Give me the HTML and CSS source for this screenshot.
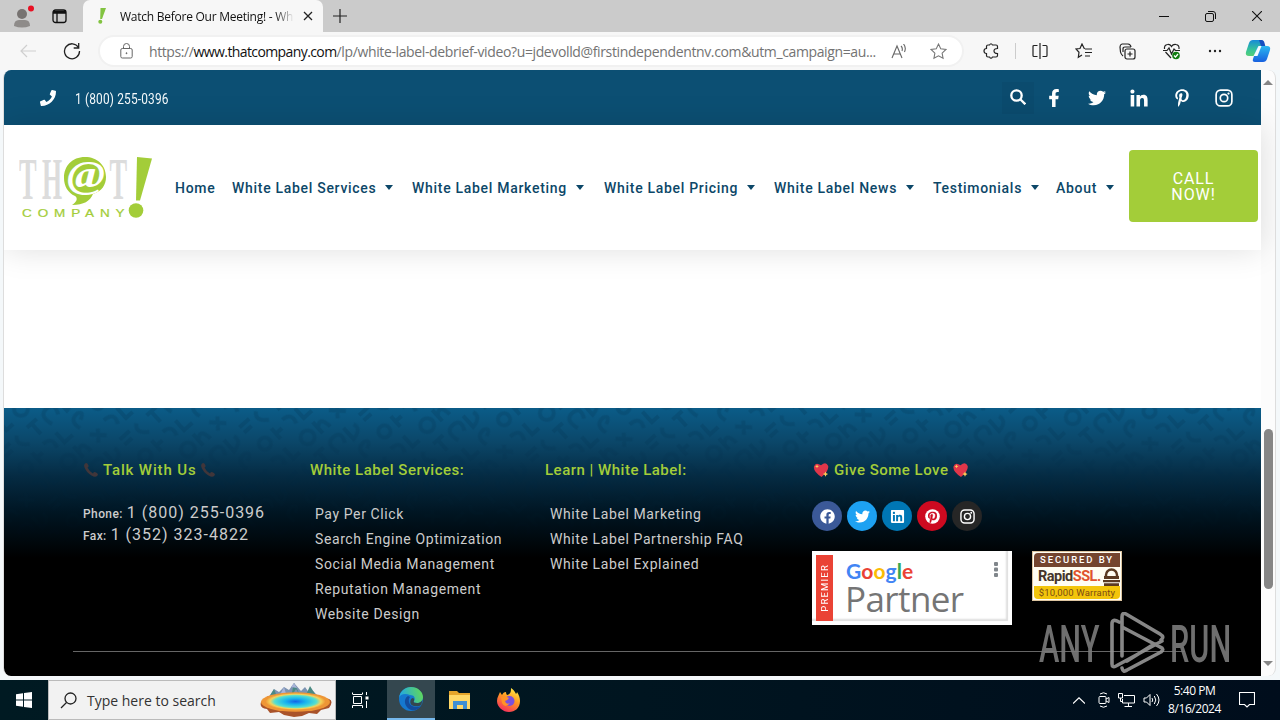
FILE: index.html
```html
<!DOCTYPE html>
<html lang="en">
<head>
  <meta charset="UTF-8">
  <meta name="viewport" content="width=device-width, initial-scale=1.0">
  <title>Watch Before Our Meeting! - White Label</title>
  <link rel="stylesheet" href="styles.css">
</head>
<body>
  <!-- shared icons -->
  <svg class="defs" width="0" height="0">
    <symbol id="twitter" viewBox="0 0 512 512"><path d="M459.37 151.716c.325 4.548.325 9.097.325 13.645 0 138.72-105.583 298.558-298.558 298.558-59.452 0-114.68-17.219-161.137-47.106 8.447.974 16.568 1.299 25.34 1.299 49.055 0 94.213-16.568 130.274-44.832-46.132-.975-84.792-31.188-98.112-72.772 6.498.974 12.995 1.624 19.818 1.624 9.421 0 18.843-1.3 27.614-3.573-48.081-9.747-84.143-51.98-84.143-102.985v-1.299c13.969 7.797 30.214 12.67 47.431 13.319-28.264-18.843-46.781-51.005-46.781-87.391 0-19.492 5.197-37.36 14.294-52.954 51.655 63.675 129.3 105.258 216.365 109.807-1.624-7.797-2.599-15.918-2.599-24.04 0-57.828 46.782-104.934 104.934-104.934 30.213 0 57.502 12.67 76.67 33.137 23.715-4.548 46.456-13.32 66.599-25.34-7.798 24.366-24.366 44.833-46.132 57.827 21.117-2.273 41.584-8.122 60.426-16.243-14.292 20.791-32.161 39.308-52.628 54.253z"/></symbol>
    <symbol id="pinterest" viewBox="0 0 384 512"><path d="M204 6.5C101.4 6.5 0 74.9 0 185.6 0 256 39.6 296 63.6 296c9.9 0 15.6-27.6 15.6-35.4 0-9.3-23.7-29.1-23.7-67.8 0-80.4 61.2-137.4 140.4-137.4 68.1 0 118.5 38.7 118.5 109.8 0 53.1-21.3 152.7-90.3 152.7-24.9 0-46.2-18-46.2-43.8 0-37.8 26.4-74.4 26.4-113.4 0-66.2-93.9-54.2-93.9 25.8 0 16.8 2.1 35.4 9.6 50.7-13.8 59.4-42 147.9-42 209.1 0 18.9 2.7 37.5 4.5 56.4 3.4 3.8 1.7 3.4 6.9 1.5 50.4-69 48.6-82.5 71.4-172.8 12.3 23.4 44.1 36 69.3 36 106.2 0 153.9-103.5 153.9-196.8C384 71.3 298.2 6.5 204 6.5z"/></symbol>
    <symbol id="instagram" viewBox="0 0 16 16"><rect x="1" y="1" width="14" height="14" rx="4" fill="none" stroke="#fff" stroke-width="1.5"/><circle cx="8" cy="8" r="3.3" fill="none" stroke="#fff" stroke-width="1.5"/><circle cx="12" cy="4" r="1"/></symbol>
    <symbol id="phone" viewBox="0 0 512 512"><path d="M493.4 24.6l-104-24c-11.3-2.6-22.9 3.3-27.5 13.9l-48 112c-4.2 9.8-1.4 21.3 6.9 28l60.6 49.6c-36 76.7-98.9 140.5-177.2 177.2l-49.6-60.6c-6.8-8.3-18.2-11.1-28-6.9l-112 48C3.9 366.5-2 378.1.6 389.4l24 104C27.1 504.2 36.7 512 48 512c256.1 0 464-207.5 464-464 0-11.2-7.7-20.9-18.6-23.4z"/></symbol>
    <symbol id="handset" viewBox="0 0 16 16"><path d="M2 1.5Q4 0 5.500 3.500Q6 5 4.500 5.500Q6 9 10 11.500Q11 9.500 12.500 10.300Q16 12 14.500 13.500Q12.500 16 8.500 13.500Q3 10 1.300 5Q.6 2.600 2 1.500z" fill="#41363a"/></symbol>
    <symbol id="heart" viewBox="0 0 16 16"><path d="M8.500 15Q0 9.500 1 4.500Q2.500-.5 8 3.300Q13-1 15.200 4Q16 9 8.500 15z" fill="#e0364a"/><path d="M4 2.500l.6 1.300 1.300.6-1.300.6L4 6.300 3.400 5l-1.300-.6 1.300-.6zM12.500 9.500l.8 1.800 1.800.8-1.800.8-.8 1.800-.8-1.800-1.800-.8 1.800-.8z" fill="#fdcb58"/></symbol>
    <symbol id="star" viewBox="0 0 16 16"><path d="M8 1l2.100 4.500 4.900.6-3.600 3.400.9 4.900L8 12l-4.300 2.400.9-4.900L1 6.100l4.900-.6z"/></symbol>
  </svg>

  <div class="tabs">
    <svg class="avatar" width="22" height="28" viewBox="0 0 22 28"><circle cx="9" cy="12" r="5" fill="#777371"/><path d="M1 24q0-6 5-6h6q5 0 5 6-8 3-16 0z" fill="#8e8b89"/><circle cx="18" cy="6.500" r="3" fill="#e81123"/></svg>
    <svg class="workspaces" width="15" height="15" viewBox="0 0 15 15" fill="none" stroke="#111" stroke-width="1.300"><rect x="1" y="1" width="13" height="12.500" rx="2.500"/><path d="M1 4h13M5 4v9.500M1 2.500h13"/></svg>
    <div class="tab">
      <svg width="8" height="16" viewBox="0 0 8 16" fill="#82c341"><path d="M2.500 0H8L4 11H2.200z"/><circle cx="2.300" cy="13.800" r="2"/></svg>
      <span class="tab-title">Watch Before Our Meeting! - Whi</span>
      <svg width="10" height="10" viewBox="0 0 10 10" stroke="#222" stroke-width="1.300"><path d="M1 1l8 8M9 1L1 9"/></svg>
    </div>
    <svg class="new-tab" width="14" height="14" viewBox="0 0 14 14" stroke="#222" stroke-width="1.200"><path d="M7 0v14M0 7h14"/></svg>
    <div class="window-buttons">
      <svg width="10" height="10" viewBox="0 0 10 10" stroke="#111"><path d="M0 5.500h10"/></svg>
      <svg width="11" height="11" viewBox="0 0 11 11" fill="none" stroke="#111"><rect x=".5" y="2.500" width="8" height="8" rx="1.500"/><path d="M3 .5h5q2.500 0 2.500 2.500v5"/></svg>
      <svg width="10" height="10" viewBox="0 0 10 10" stroke="#111" stroke-width="1.100"><path d="M0 0l10 10M10 0L0 10"/></svg>
    </div>
  </div>

  <div class="toolbar">
    <svg class="back" width="16" height="14" viewBox="0 0 16 14" fill="none" stroke="#cfcfcf" stroke-width="1.200"><path d="M16 7H1M7 1L1 7l6 6"/></svg>
    <svg class="reload" width="18" height="18" viewBox="0 0 18 18" fill="none" stroke="#222" stroke-width="1.300"><path d="M15.500 5.500A7.500 7.500 0 1 0 16.500 9M15.700 1v5h-5"/></svg>
    <div class="address">
      <svg width="13" height="16" viewBox="0 0 13 16" fill="none" stroke="#666"><rect x=".8" y="5.500" width="11.400" height="9.500" rx="1.500"/><path d="M3.500 5.500V3.500a3 3 0 0 1 6 0v2"/><circle cx="6.500" cy="10.200" r=".5" fill="#666"/></svg>
      <span class="url">https://<b>www.thatcompany.com</b><i>/lp/white-label-debrief-video?u=jdevolld@firstindependentnv.com&amp;utm_campaign=au...</i></span>
      <svg class="read" width="17" height="15" viewBox="0 0 17 15" fill="none" stroke="#666" stroke-width="1.100"><path d="M1 14L6 2l5 12M2.800 10h6.500M10 2q2 2 1 5M12.500 0q3 3.500 1 8"/></svg>
      <svg class="fav" width="17" height="17" fill="none" stroke="#777"><use href="#star"/></svg>
    </div>
    <div class="tools">
      <svg width="16" height="16" viewBox="0 0 16 16" fill="none" stroke="#222" stroke-width="1.200"><path d="M3.500 5.500V3.500q0-1.500 1.500-1.500h1.500q1.500-2.500 3 0H13q1.500 0 1.500 1.500v2q-3.500 0-3.500 2.500t3.500 2.500v2q0 1.500-1.500 1.500H9.500q-1.500 2.500-3 0H5q-1.500 0-1.500-1.500v-2Q1 10.500 1 8t2.500-2.500z"/></svg>
      <span class="divider"></span>
      <svg width="16" height="16" viewBox="0 0 16 16" fill="none" stroke="#222" stroke-width="1.200"><path d="M5.500 2.500H2q-1 0-1 1v9q0 1 1 1h3.500M10.500 2.500H14q1 0 1 1v9q0 1-1 1h-3.500M8 0v16"/></svg>
      <svg width="17" height="16" viewBox="0 0 17 16" fill="none" stroke="#222" stroke-width="1.200"><path d="M9.500 6L7 1 5 5.500 1 6l3 3.300-.7 5L7 12M10 6h7M10 9.500h7M10 13h5"/></svg>
      <svg width="17" height="17" viewBox="0 0 17 17" fill="none" stroke="#222" stroke-width="1.200"><path d="M4 13Q2 11.500 1.500 9L1 4q0-2.500 2-3h6q2.500 0 3 3"/><path d="M4 9V6q0-2 2-2h6"/><rect x="6" y="6" width="10" height="10" rx="2" fill="#f7f7f7"/><path d="M11 8.500v5M8.500 11h5"/></svg>
      <svg width="18" height="17" viewBox="0 0 18 17" fill="none" stroke="#222" stroke-width="1.200"><path d="M8 15L2.500 9M1.500 6Q1 2 4.500 1.500 7 1 8.500 3.500 10 1 13 1.500 16.500 2 16 6M0 7.500h4L6 5l2.500 6L11 6l1.500 1.500H17"/><circle cx="13" cy="12.500" r="3.800" fill="#107c10" stroke="none"/><path d="M11 12.500l1.500 1.500 2.500-3" stroke="#fff"/></svg>
      <svg width="14" height="4" viewBox="0 0 14 4" fill="#222"><circle cx="2" cy="2" r="1.200"/><circle cx="7" cy="2" r="1.200"/><circle cx="12" cy="2" r="1.200"/></svg>
    </div>
    <svg class="copilot" width="26" height="24" viewBox="0 0 26 24">
      <defs>
        <linearGradient id="cpa" x1="0" y1="0" x2="0" y2="1"><stop offset="0" stop-color="#168bd8"/><stop offset=".6" stop-color="#35c39a"/><stop offset="1" stop-color="#55cf78"/></linearGradient>
        <linearGradient id="cpb" x1="0" y1="0" x2="0" y2="1"><stop offset="0" stop-color="#2ab8f0"/><stop offset="1" stop-color="#1860df"/></linearGradient>
      </defs>
      <path d="M8 1h8q3 0 2 3l-3 9q-2 4-6 4H4q-4 0-3-4L4 4q1-3 4-3z" fill="url(#cpa)"/>
      <path d="M16 7h6q4 0 3 4l-3 9q-1 3-4 3h-8q-3 0-2-3l3-9q1-4 5-4z" fill="url(#cpb)"/>
      <path d="M13.500 7h3l-4 10h-4z" fill="#f4fbff"/>
      <path d="M14 1h2q3 0 3.500 3l.8 3H16z" fill="#154fc0"/>
    </svg>
  </div>

  <div class="viewport">
    <div class="page">
      <div class="topbar">
        <svg class="phone-icon" width="16" height="16" fill="#fff"><use href="#phone"/></svg>
        <span class="topbar-phone">1 (800) 255-0396</span>
        <div class="topbar-icons">
          <span class="search"><svg width="16" height="16" viewBox="0 0 16 16" fill="none" stroke="#fff" stroke-width="2.300"><circle cx="6.500" cy="6.500" r="5.200"/><path d="M10.300 10.300l5 5"/></svg></span>
          <svg width="18" height="18" viewBox="0 0 320 512" fill="#fff"><path d="M279.14 288l14.22-92.66h-88.91v-60.13c0-25.35 12.42-50.06 52.24-50.06h40.42V6.26S260.43 0 225.36 0c-73.22 0-121.08 44.38-121.08 124.72v70.62H22.89V288h81.39v224h100.17V288z"/></svg>
          <svg width="18" height="18" fill="#fff"><use href="#twitter"/></svg>
          <svg width="18" height="18" viewBox="-10 0 468 448" fill="#fff"><path d="M100.28 448H7.4V148.9h92.88zM53.79 108.1C24.09 108.1 0 83.5 0 53.8a53.79 53.79 0 0 1 107.58 0c0 29.7-24.1 54.3-53.79 54.3zM447.9 448h-92.68V302.4c0-34.7-.7-79.2-48.29-79.2-48.29 0-55.69 37.7-55.69 76.7V448h-92.78V148.9h89.08v40.8h1.3c12.4-23.5 42.69-48.3 87.88-48.3 94 0 111.28 61.9 111.28 142.3V448z"/></svg>
          <svg width="18" height="18" fill="#fff"><use href="#pinterest"/></svg>
          <svg width="18" height="18" fill="#fff"><use href="#instagram"/></svg>
        </div>
      </div>

      <header>
        <svg class="logo" width="134" height="64" viewBox="0 0 134 64">
          <g fill="#dcdcdc" font-family="Liberation Serif, serif" font-size="60" font-weight="bold">
            <text transform="translate(0 43) scale(.44 1)">T</text>
            <text transform="translate(23 43) scale(.43 1)">H</text>
            <text transform="translate(90.500 43) scale(.44 1)">T</text>
          </g>
          <path d="M66 1C53 1 45 10 45 22c0 8 4 15 11 18 3 2 2 6-3 9 12 0 18-4 21-11 9-3 13-9 13-17C87 9 78 1 66 1z" fill="#a3cd39"/>
          <text x="48" y="31" font-family="Liberation Serif, serif" font-style="italic" font-weight="bold" font-size="37" textLength="38" lengthAdjust="spacingAndGlyphs" fill="#fff">@</text>
          <path d="M118 1l15 1.500-12 42h-4z" fill="#a3cd39"/><circle cx="117" cy="54.500" r="7.300" fill="#a3cd39"/>
          <text transform="translate(3 61) scale(1.35 1)" font-family="Liberation Sans, sans-serif" font-size="10" stroke="#a3cd39" stroke-width=".2" textLength="76" fill="#a3cd39">COMPANY</text>
        </svg>
        <nav>
          <a href="#">Home</a>
          <a href="#" class="drop">White Label Services</a>
          <a href="#" class="drop">White Label Marketing</a>
          <a href="#" class="drop">White Label Pricing</a>
          <a href="#" class="drop">White Label News</a>
          <a href="#" class="drop">Testimonials</a>
          <a href="#" class="drop">About</a>
        </nav>
        <a href="#" class="call">CALL<br>NOW!</a>
      </header>

      <main></main>

      <footer>
        <svg class="texture" width="1257" height="140">
          <defs>
            <pattern id="swirl" width="97" height="71" patternUnits="userSpaceOnUse" patternTransform="rotate(-42)" fill="none" stroke="#032c48" stroke-width="4">
              <circle cx="12" cy="12" r="7"/><path d="M26 4v15M26 12q9-9 10 7M46 6l12 12M47 18l9-11M66 5q14 0 8 12M84 4v14h9"/>
              <path d="M4 30h13M10 30v14M25 44q-5-15 6-15t5 12M45 29v15q13-2 10-11M65 30h13M65 37h10M88 29q-8 7 4 15"/>
              <circle cx="73" cy="59" r="6"/><path d="M5 53q12 0 8 12M22 53v13h11M43 66q-4-13 8-13 7 3-2 7M88 52v14M88 59h8"/>
            </pattern>
            <linearGradient id="fade" x1="0" y1="0" x2="0" y2="1"><stop offset="0" stop-color="#fff"/><stop offset="1" stop-color="#000"/></linearGradient>
            <mask id="fadeMask"><rect width="1257" height="140" fill="url(#fade)"/></mask>
          </defs>
          <rect width="1257" height="140" fill="url(#swirl)" opacity=".2" mask="url(#fadeMask)"/>
        </svg>
        <div class="columns">
          <div class="talk">
            <h3><svg width="16" height="16"><use href="#handset"/></svg><span>Talk With Us</span><svg width="16" height="16"><use href="#handset"/></svg></h3>
            <p><b>Phone:</b> <span>1 (800) 255-0396</span></p>
            <p><b>Fax:</b> <span>1 (352) 323-4822</span></p>
          </div>
          <div class="links">
            <h3>White Label Services:</h3>
            <ul>
              <li>Pay Per Click</li>
              <li>Search Engine Optimization</li>
              <li>Social Media Management</li>
              <li>Reputation Management</li>
              <li>Website Design</li>
            </ul>
          </div>
          <div class="links">
            <h3>Learn | White Label:</h3>
            <ul>
              <li>White Label Marketing</li>
              <li>White Label Partnership FAQ</li>
              <li>White Label Explained</li>
            </ul>
          </div>
          <div class="love">
            <h3><svg width="18" height="16"><use href="#heart"/></svg><span>Give Some Love</span><svg width="17" height="16"><use href="#heart"/></svg></h3>
            <div class="social">
              <span class="facebook"><svg width="15" height="15" viewBox="0 0 512 512" fill="#fff"><path d="M504 256C504 119 393 8 256 8S8 119 8 256c0 123.780 90.690 226.380 209.250 245V327.690h-63V256h63v-54.640c0-62.150 37-96.480 93.670-96.480 27.140 0 55.520 4.840 55.520 4.840v61h-31.280c-30.800 0-40.410 19.120-40.410 38.730V256h68.780l-11 71.690h-57.780V501C413.310 482.380 504 379.780 504 256z"/></svg></span>
              <span class="twitter"><svg width="15" height="15" fill="#fff"><use href="#twitter"/></svg></span>
              <span class="linkedin"><svg width="15" height="15" viewBox="0 0 448 512" fill="#fff"><path d="M416 32H31.900C14.300 32 0 46.500 0 64.300v383.400C0 465.500 14.300 480 31.900 480H416c17.600 0 32-14.500 32-32.300V64.300c0-17.800-14.400-32.300-32-32.300zM135.400 416H69V202.200h66.500V416zm-33.200-243c-21.300 0-38.500-17.300-38.500-38.500S80.900 96 102.200 96c21.200 0 38.500 17.300 38.500 38.500 0 21.300-17.200 38.500-38.500 38.500zm282.100 243h-66.400V312c0-24.800-.5-56.700-34.500-56.700-34.600 0-39.900 27-39.900 54.900V416h-66.400V202.200h63.700v29.200h.9c8.900-16.800 30.600-34.500 62.900-34.500 67.200 0 79.700 44.300 79.700 101.900V416z"/></svg></span>
              <span class="pinterest"><svg width="15" height="15" viewBox="0 0 15 15"><circle cx="7.500" cy="7.500" r="7.300" fill="#fff"/><use href="#pinterest" x="3" y="2.500" width="9" height="12" fill="#cd0a20" stroke="#cd0a20" stroke-width="20"/></svg></span>
              <span class="instagram"><svg width="15" height="15" fill="#fff"><use href="#instagram"/></svg></span>
            </div>
            <div class="badges">
              <div class="partner">
                <div class="premier"><span>PREMIER</span></div>
                <div class="partner-text">
                  <div class="google"><span class="g-blue">G</span><span class="g-red">o</span><span class="g-yellow">o</span><span class="g-blue">g</span><span class="g-green">l</span><span class="g-red">e</span></div>
                  <div class="partner-name">Partner</div>
                </div>
                <svg class="dots" width="4" height="15" viewBox="0 0 4 15" fill="#80868b"><rect width="4" height="4" rx="1"/><rect y="5.500" width="4" height="4" rx="1"/><rect y="11" width="4" height="4" rx="1"/></svg>
              </div>
              <div class="ssl">
                <div class="ssl-top">SECURED BY</div>
                <div class="ssl-mid"><span>Rapid<em>SSL.</em></span>
                  <svg width="17" height="18" viewBox="0 0 17 18" fill="#5b3a22"><path d="M3 9V7a5.500 5.500 0 0 1 11 0v2" fill="none" stroke="#5b3a22" stroke-width="2.500"/><path d="M1 8h15v3H1zM0 12h17v2.300H0zM1 15.300h15V18H1z"/></svg>
                </div>
                <div class="ssl-bottom">$10,000 Warranty</div>
              </div>
            </div>
          </div>
        </div>
        <div class="rule"></div>
      </footer>
    </div>
    <div class="scrollbar"><span class="up"></span><span class="thumb"></span><span class="down"></span></div>
  </div>

  <div class="watermark">
    <span>ANY</span>
    <svg width="56" height="62" viewBox="0 0 56 62" fill="none" stroke="#969696" stroke-width="3.600" stroke-linejoin="round" stroke-linecap="round">
      <path d="M9 10Q2 6 2 12v40q0 4 4 2L52 29M12 44V5q0-5 4-3l34 20q5 3 1 6M14 16l36 19q5 2 1 5L17 58q-4 3-5-2M12 44V14M17 49l24-15"/>
    </svg>
    <span>RUN</span>
  </div>

  <div class="taskbar">
    <div class="start"><svg width="16" height="16" viewBox="0 0 16 16" fill="#fff"><path d="M0 2.200L7 1.200v6.300H0zM8 1.100L16 0v7.500H8zM0 8.500h7v6.300l-7-1zM8 8.500h8V16l-8-1.100z"/></svg></div>
    <div class="search-box">
      <svg width="17" height="17" viewBox="0 0 17 17" fill="none" stroke="#222" stroke-width="1.300"><circle cx="10.500" cy="6.500" r="5.500"/><path d="M6.500 10.500L1 16"/></svg>
      <span>Type here to search</span>
      <svg class="spring" width="72" height="36" viewBox="0 0 72 36">
        <defs><radialGradient id="pool"><stop offset="0" stop-color="#1463e8"/><stop offset=".35" stop-color="#18b5ee"/><stop offset=".7" stop-color="#55dfcf"/><stop offset=".85" stop-color="#f4d35a"/><stop offset="1" stop-color="#ee9636"/></radialGradient></defs>
        <path d="M9 15l5-8 5 3 5-5 5 3 5-7 7 8 4-4 5 7 3-3 8 8z" fill="#7c93b1"/><path d="M14 7l3 8H9zM34 1l-3 14 5-8 5 8zM50 4l-5 11h12z" fill="#4a8a83"/><path d="M24 5l3 10h-8zM34 1l3 5-6-1z" fill="#a9b3d8"/>
        <path d="M1 20q-2 6 6 7l3 4 9-1 5 3 10 2 8-1 7-3 8 1 4-4 8-2q5-7 0-9L35 12 8 14z" fill="#a9532a"/>
        <ellipse cx="35.500" cy="20" rx="34.500" ry="9.800" fill="#ee9636"/><ellipse cx="35.500" cy="19.500" rx="30" ry="8.500" fill="url(#pool)"/>
      </svg>
    </div>
    <div class="task"><svg width="17" height="17" viewBox="0 0 17 17" fill="none" stroke="#fff"><path d="M.5 2V.5M.5 2.500h10M10.500 2V.5M1.500 4.500h8v7h-8zM.5 16v-2.500h10V16M14.500 0v3M14.500 9v7"/><path d="M13.500 4.500h3v3h-3z" fill="#fff" stroke="none"/></svg></div>
    <div class="task active"><svg width="24" height="24" viewBox="0 0 24 24">
      <defs><linearGradient id="ea" x1="0" y1=".5" x2="1" y2=".3"><stop offset="0" stop-color="#1fa6e8"/><stop offset="1" stop-color="#62d957"/></linearGradient></defs>
      <circle cx="12" cy="12" r="12" fill="#1578cf"/><path d="M0 11C1 4 6 0 12 0c7 0 12 5 12 10 0 4-3 6-6 6-3 0-4-1-3-2 2-3 0-6-4-6C6 6 1 7 0 11z" fill="url(#ea)"/><path d="M9 9c-5 3-4 11 3 14 4 1 8-1 10-4-4 2-11 1-12-4-.5-2 0-4 1-5z" fill="#134c9d"/><path d="M15 14c-1 1 0 2 3 2 3 0 5.500-1.500 6-5l-1.700 7c-3 2-11 2-11-3 0-2 1-4 3-4q1.500 1.500.7 3z" fill="#34474f"/>
    </svg></div>
    <div class="task"><svg width="22" height="20" viewBox="0 0 22 20"><path d="M0 1h8l2 2h11v16H0z" fill="#e5a52b"/><path d="M0 5h21v14H0z" fill="#ffd867"/><path d="M4 19v-8h14v8h-4v-4H8v4z" fill="#3f8fd2"/></svg></div>
    <div class="task"><svg width="23" height="24" viewBox="0 0 23 24">
      <defs><linearGradient id="ff" x1=".8" y1="0" x2=".3" y2="1"><stop offset="0" stop-color="#fff04a"/><stop offset=".45" stop-color="#ff9a22"/><stop offset="1" stop-color="#f52c5e"/></linearGradient></defs>
      <path d="M14 0c3 2 4 4 5 6q1-1 1-2c2 3 3 6 3 9 0 7-5 11-11 11S0 19 0 13c0-4 2-6 3-9l2 3c1-2 2-3 4-3q0 2 1 3c4-1 4-4 4-7z" fill="url(#ff)"/><circle cx="12.500" cy="13" r="5" fill="#7950df"/><path d="M4 9q5-1 8 1-2 3-4 3 1 4 5 2-5 6-8 0z" fill="#ff9326"/>
    </svg></div>
    <div class="tray">
      <svg width="12" height="7" viewBox="0 0 12 7" fill="none" stroke="#fff" stroke-width="1.200"><path d="M0 6.500L6 .8l6 5.700"/></svg>
      <svg width="12" height="16" viewBox="0 0 12 16" fill="none" stroke="#fff"><rect x="1" y="4.500" width="7" height="7" rx="1"/><path d="M8 7l3-1.500v5L8 9M2 2q3.500-2.500 7 0M2 14q3.500 2.500 7 0"/></svg>
      <svg width="17" height="14" viewBox="0 0 17 14" fill="none" stroke="#fff"><path d="M6 2.500h10.500v7.500H4.500V6M.5.500h4V5h-4zM2.500 5v3.500h2M10.500 10v3M6.500 13.500h7.500"/></svg>
      <svg width="17" height="14" viewBox="0 0 17 14" fill="none" stroke="#fff"><path d="M1 5h2.500L7 1.500v11L3.500 9H1zM9 5q1.500 2 0 4M11.300 3q3 4 0 8M13.500 1q5 6 0 12"/></svg>
      <div class="clock">5:40 PM<br>8/16/2024</div>
      <svg class="notice" width="16" height="16" viewBox="0 0 16 16" fill="none" stroke="#fff" stroke-width="1.100"><path d="M.5.500h15v12h-5L8 15l-2.500-2.500h-5z"/></svg>
    </div>
  </div>
</body>
</html>
```
FILE: styles.css
```css
* {
  box-sizing: border-box;
}

body {
  margin: 0;
  width: 1280px;
  height: 720px;
  overflow: hidden;
  background: #f4f8fa;
  font-family: "Open Sans", "Noto Sans", sans-serif;
  display: flex;
  flex-direction: column;
}

svg {
  display: block;
  flex: none;
}

a {
  text-decoration: none;
}

.defs {
  position: absolute;
}

/* browser */
.tabs {
  height: 32px;
  flex: none;
  display: flex;
  align-items: center;
  background: #cbcbcb;
}

.avatar {
  margin-left: 13px;
}

.workspaces {
  margin-left: 17px;
}

.tab {
  width: 240px;
  height: 32px;
  margin-left: 16px;
  padding: 0 10px 0 15px;
  display: flex;
  align-items: center;
  background: #f7f7f7;
  border-radius: 7px 7px 0 0;
}

.tab-title {
  width: 175px;
  margin-left: 14px;
  margin-right: 8px;
  font-size: 12px;
  letter-spacing: -0.25px;
  white-space: nowrap;
  color: #111;
  -webkit-mask-image: linear-gradient(to right, #000 155px, transparent 174px);
  mask-image: linear-gradient(to right, #000 155px, transparent 174px);
}

.new-tab {
  margin-left: 10px;
}

.window-buttons {
  margin-left: auto;
  margin-right: 18px;
  display: flex;
  align-items: center;
  gap: 36px;
}

.toolbar {
  height: 38px;
  flex: none;
  display: flex;
  align-items: center;
  background: #f7f7f7;
}

.back {
  margin-left: 20px;
}

.reload {
  margin-left: 27px;
}

.address {
  width: 866px;
  height: 32px;
  margin-left: 17px;
  padding: 0 15px 0 20px;
  display: flex;
  align-items: center;
  background: #fff;
  border: 2px solid #f1f1f1;
  border-radius: 16px;
}

.url {
  width: 731px;
  margin-left: 16px;
  font-size: 14px;
  letter-spacing: -0.4px;
  white-space: nowrap;
  color: #737373;
}

.url b {
  font-weight: 400;
  letter-spacing: -0.6px;
  color: #111;
}

.url i {
  font-style: normal;
  letter-spacing: -0.37px;
}

.read {
  margin-left: 11px;
}

.fav {
  margin-left: 22px;
}

.tools {
  margin-left: 19px;
  display: flex;
  align-items: center;
  gap: 27px;
}

.divider {
  width: 1px;
  height: 16px;
  margin: 0 -11px;
  background: #ccc;
}

.copilot {
  margin-left: 23px;
}

/* web page */
.viewport {
  width: 1273px;
  height: 606px;
  flex: none;
  margin-left: 3px;
  display: flex;
  background: #fcfcfc;
  border-left: 1px solid #ddd;
  border-right: 1px solid #ddd;
  border-radius: 8px;
  overflow: hidden;
}

.page {
  width: 1257px;
  display: flex;
  flex-direction: column;
  background: #fff;
  font-family: Roboto, sans-serif;
}

.topbar {
  height: 55px;
  flex: none;
  display: flex;
  align-items: center;
  padding: 0 28px 0 36px;
  background: #0c4f73;
}

.topbar-phone {
  margin: 2px 0 0 19px;
  font-size: 14px;
  letter-spacing: 0.2px;
  color: #f4f9fb;
  white-space: nowrap;
  transform: scaleX(0.85);
  transform-origin: left;
}

.topbar-icons {
  margin-left: auto;
  display: flex;
  align-items: center;
  gap: 24.5px;
}

.search {
  width: 32px;
  height: 32px;
  margin-right: -13px;
  padding-bottom: 2px;
  display: grid;
  place-items: center;
  background: #0b4b6e;
}

header {
  position: relative;
  z-index: 1;
  height: 125px;
  flex: none;
  display: flex;
  align-items: center;
  background: #fff;
  box-shadow: 0 0 30px rgba(0, 0, 0, 0.13);
}

.logo {
  margin-left: 15px;
}

nav {
  margin-left: 22px;
  display: grid;
  grid-template-columns: 57px 180px 192px 170px 159px 123px 73px;
}

nav a {
  display: flex;
  align-items: center;
  font-size: 14px;
  font-weight: 500;
  letter-spacing: 0.7px;
  white-space: nowrap;
  color: #0c4768;
}

.drop::after {
  content: "";
  margin-left: 9px;
  border: 4.5px solid transparent;
  border-top: 5px solid #0c4768;
  border-bottom: 0;
}

.call {
  width: 129px;
  height: 72px;
  margin-bottom: 3px;
  padding-top: 1px;
  display: grid;
  place-content: center;
  background: #a3cd39;
  border-radius: 4px;
  color: #fff;
  font-size: 16px;
  line-height: 16px;
  letter-spacing: 0.9px;
  text-align: center;
}

main {
  height: 158px;
  flex: none;
}

footer {
  position: relative;
  height: 268px;
  flex: none;
  background: linear-gradient(#0b5c88 0, #0b4668 35px, #052b43 68px, #001522 105px, #000 150px);
}

.texture {
  position: absolute;
  top: 0;
  left: 0;
}

.columns {
  position: relative;
  height: 243px;
  padding: 52px 0 0 79px;
  display: grid;
  grid-template-columns: 227px 235px 267px 1fr;
}

h3 {
  height: 20px;
  margin: 0 0 21px;
  display: flex;
  align-items: center;
  gap: 4px;
  font-size: 15px;
  line-height: 20px;
  font-weight: 500;
  letter-spacing: 0.5px;
  white-space: nowrap;
  color: #a3cd39;
}

.talk p {
  position: relative;
  top: 1px;
  margin: 0;
  height: 22px;
  line-height: 22px;
  color: #ccc;
  white-space: nowrap;
}

.talk b {
  font-size: 12px;
  font-weight: 500;
  letter-spacing: 0.4px;
}

.talk span {
  font-size: 16px;
  letter-spacing: 1px;
}

.talk h3 span {
  font-size: 15px;
  letter-spacing: 0.85px;
}

.links ul {
  margin: 0;
  padding: 1px 0 0 5px;
  list-style: none;
}

.links li {
  height: 25px;
  line-height: 25px;
  font-size: 14px;
  letter-spacing: 0.6px;
  white-space: nowrap;
  color: #ccc;
}

.social {
  display: flex;
  gap: 5px;
}

.social span {
  width: 30px;
  height: 30px;
  display: grid;
  place-items: center;
  border-radius: 50%;
}

.facebook {
  background: #3b5998;
}

.twitter {
  background: #1da1f2;
}

.linkedin {
  background: #0077b5;
}

.pinterest {
  background: #cd0a20;
}

.instagram {
  background: #262626;
}

.badges {
  margin-top: 20px;
  display: flex;
  align-items: flex-start;
  gap: 20px;
}

.partner {
  width: 200px;
  height: 74px;
  padding: 4px;
  display: flex;
  background: #fff;
  box-shadow: inset -4px -4px 1px #fff, inset -6px -6px 2px #ddd;
}

.premier {
  width: 17px;
  display: grid;
  place-items: center;
  background: #ea4335;
}

.premier span {
  writing-mode: vertical-rl;
  transform: rotate(180deg);
  font-size: 9.5px;
  letter-spacing: 1.2px;
  color: #fff;
}

.partner-text {
  width: 149px;
  padding: 6px 0 0 13px;
  font-family: "Open Sans", sans-serif;
}

.google {
  height: 20px;
  display: flex;
  line-height: 20px;
  font-family: Lato, sans-serif;
  font-size: 21px;
  font-weight: 700;
  letter-spacing: 0.05px;
}

.g-blue {
  color: #4285f4;
}

.g-red {
  color: #ea4335;
}

.g-yellow {
  color: #fbbc05;
}

.g-green {
  color: #34a853;
}

.partner-name {
  height: 35px;
  margin-left: -1px;
  line-height: 35px;
  font-size: 35px;
  letter-spacing: -0.6px;
  color: #757575;
}

.dots {
  margin: 7px 0 0 12px;
}

.ssl {
  width: 90px;
  height: 50px;
  padding: 1px;
  background: #fffdf2;
  border: 1px solid #ddc5a0;
}

.ssl div {
  white-space: nowrap;
}

.ssl-top {
  height: 14px;
  background: #74452f;
  border-radius: 4px 0 0 0;
  color: #fff;
  font-size: 9.5px;
  line-height: 14px;
  font-weight: 500;
  letter-spacing: 1.9px;
  text-align: center;
}

.ssl-mid {
  height: 19px;
  padding-left: 4px;
  display: flex;
  align-items: center;
  justify-content: space-between;
  font-size: 14.5px;
  font-weight: 700;
  letter-spacing: -0.5px;
  color: #46352a;
}

.ssl-mid em {
  font-style: normal;
  color: #e0522d;
}

.ssl-bottom {
  height: 13px;
  background: #f3c50b;
  border-radius: 0 0 4px 4px;
  color: #7a4b13;
  font-size: 9.5px;
  letter-spacing: 0.15px;
  line-height: 13px;
  text-align: center;
}

.rule {
  width: 1112px;
  height: 1px;
  margin-left: 69px;
  background: #666;
}

.scrollbar {
  width: 14px;
  display: flex;
  flex-direction: column;
  align-items: center;
}

.up {
  margin-top: 10px;
  border: 5px solid transparent;
  border-top: 0;
  border-bottom: 5px solid #868686;
}

.thumb {
  width: 9px;
  height: 160px;
  margin-top: 344px;
  border-radius: 5px;
  background: #868686;
}

.down {
  margin-top: 72px;
  border: 5px solid transparent;
  border-bottom: 0;
  border-top: 5px solid #868686;
}

/* watermark lies over the page corner */
.watermark {
  position: absolute;
  left: 1039px;
  top: 610px;
  display: flex;
  align-items: center;
  opacity: 0.9;
}

.watermark span {
  width: 62px;
  margin-top: 4px;
  font-family: Roboto, sans-serif;
  font-size: 52px;
  font-weight: 500;
  line-height: 62px;
  color: #7c7c7c;
  transform: scaleX(0.59);
  transform-origin: left;
}

.watermark svg {
  margin: 0 4px 0 9px;
}

/* taskbar */
.taskbar {
  height: 40px;
  flex: none;
  margin-top: 4px;
  display: flex;
  background: linear-gradient(to right, #001a22, #001520 50%, #000d1c);
}

.start,
.task {
  width: 48px;
  display: grid;
  place-items: center;
}

.active {
  margin: 0 1px 0 3px;
  background: #34474f;
  border-bottom: 2px solid #76b9ed;
}

.search-box {
  width: 288px;
  display: flex;
  align-items: center;
  padding-left: 11px;
  background: #f2f2f2;
  border: 1px solid #bbb;
}

.search-box span {
  width: 129px;
  margin-left: 10px;
  font-size: 14px;
  white-space: nowrap;
  color: #333;
}

.spring {
  margin-left: 44px;
}

.tray {
  margin-left: auto;
  padding-right: 25px;
  display: flex;
  align-items: center;
}

.tray > svg {
  margin-left: 8px;
}

.tray > svg:first-child {
  margin-right: 5px;
}

.clock {
  width: 69px;
  color: #fff;
  font-size: 12px;
  line-height: 18px;
  letter-spacing: -0.45px;
  text-align: center;
  white-space: nowrap;
}

.tray > .notice {
  margin-left: 10px;
}
```
